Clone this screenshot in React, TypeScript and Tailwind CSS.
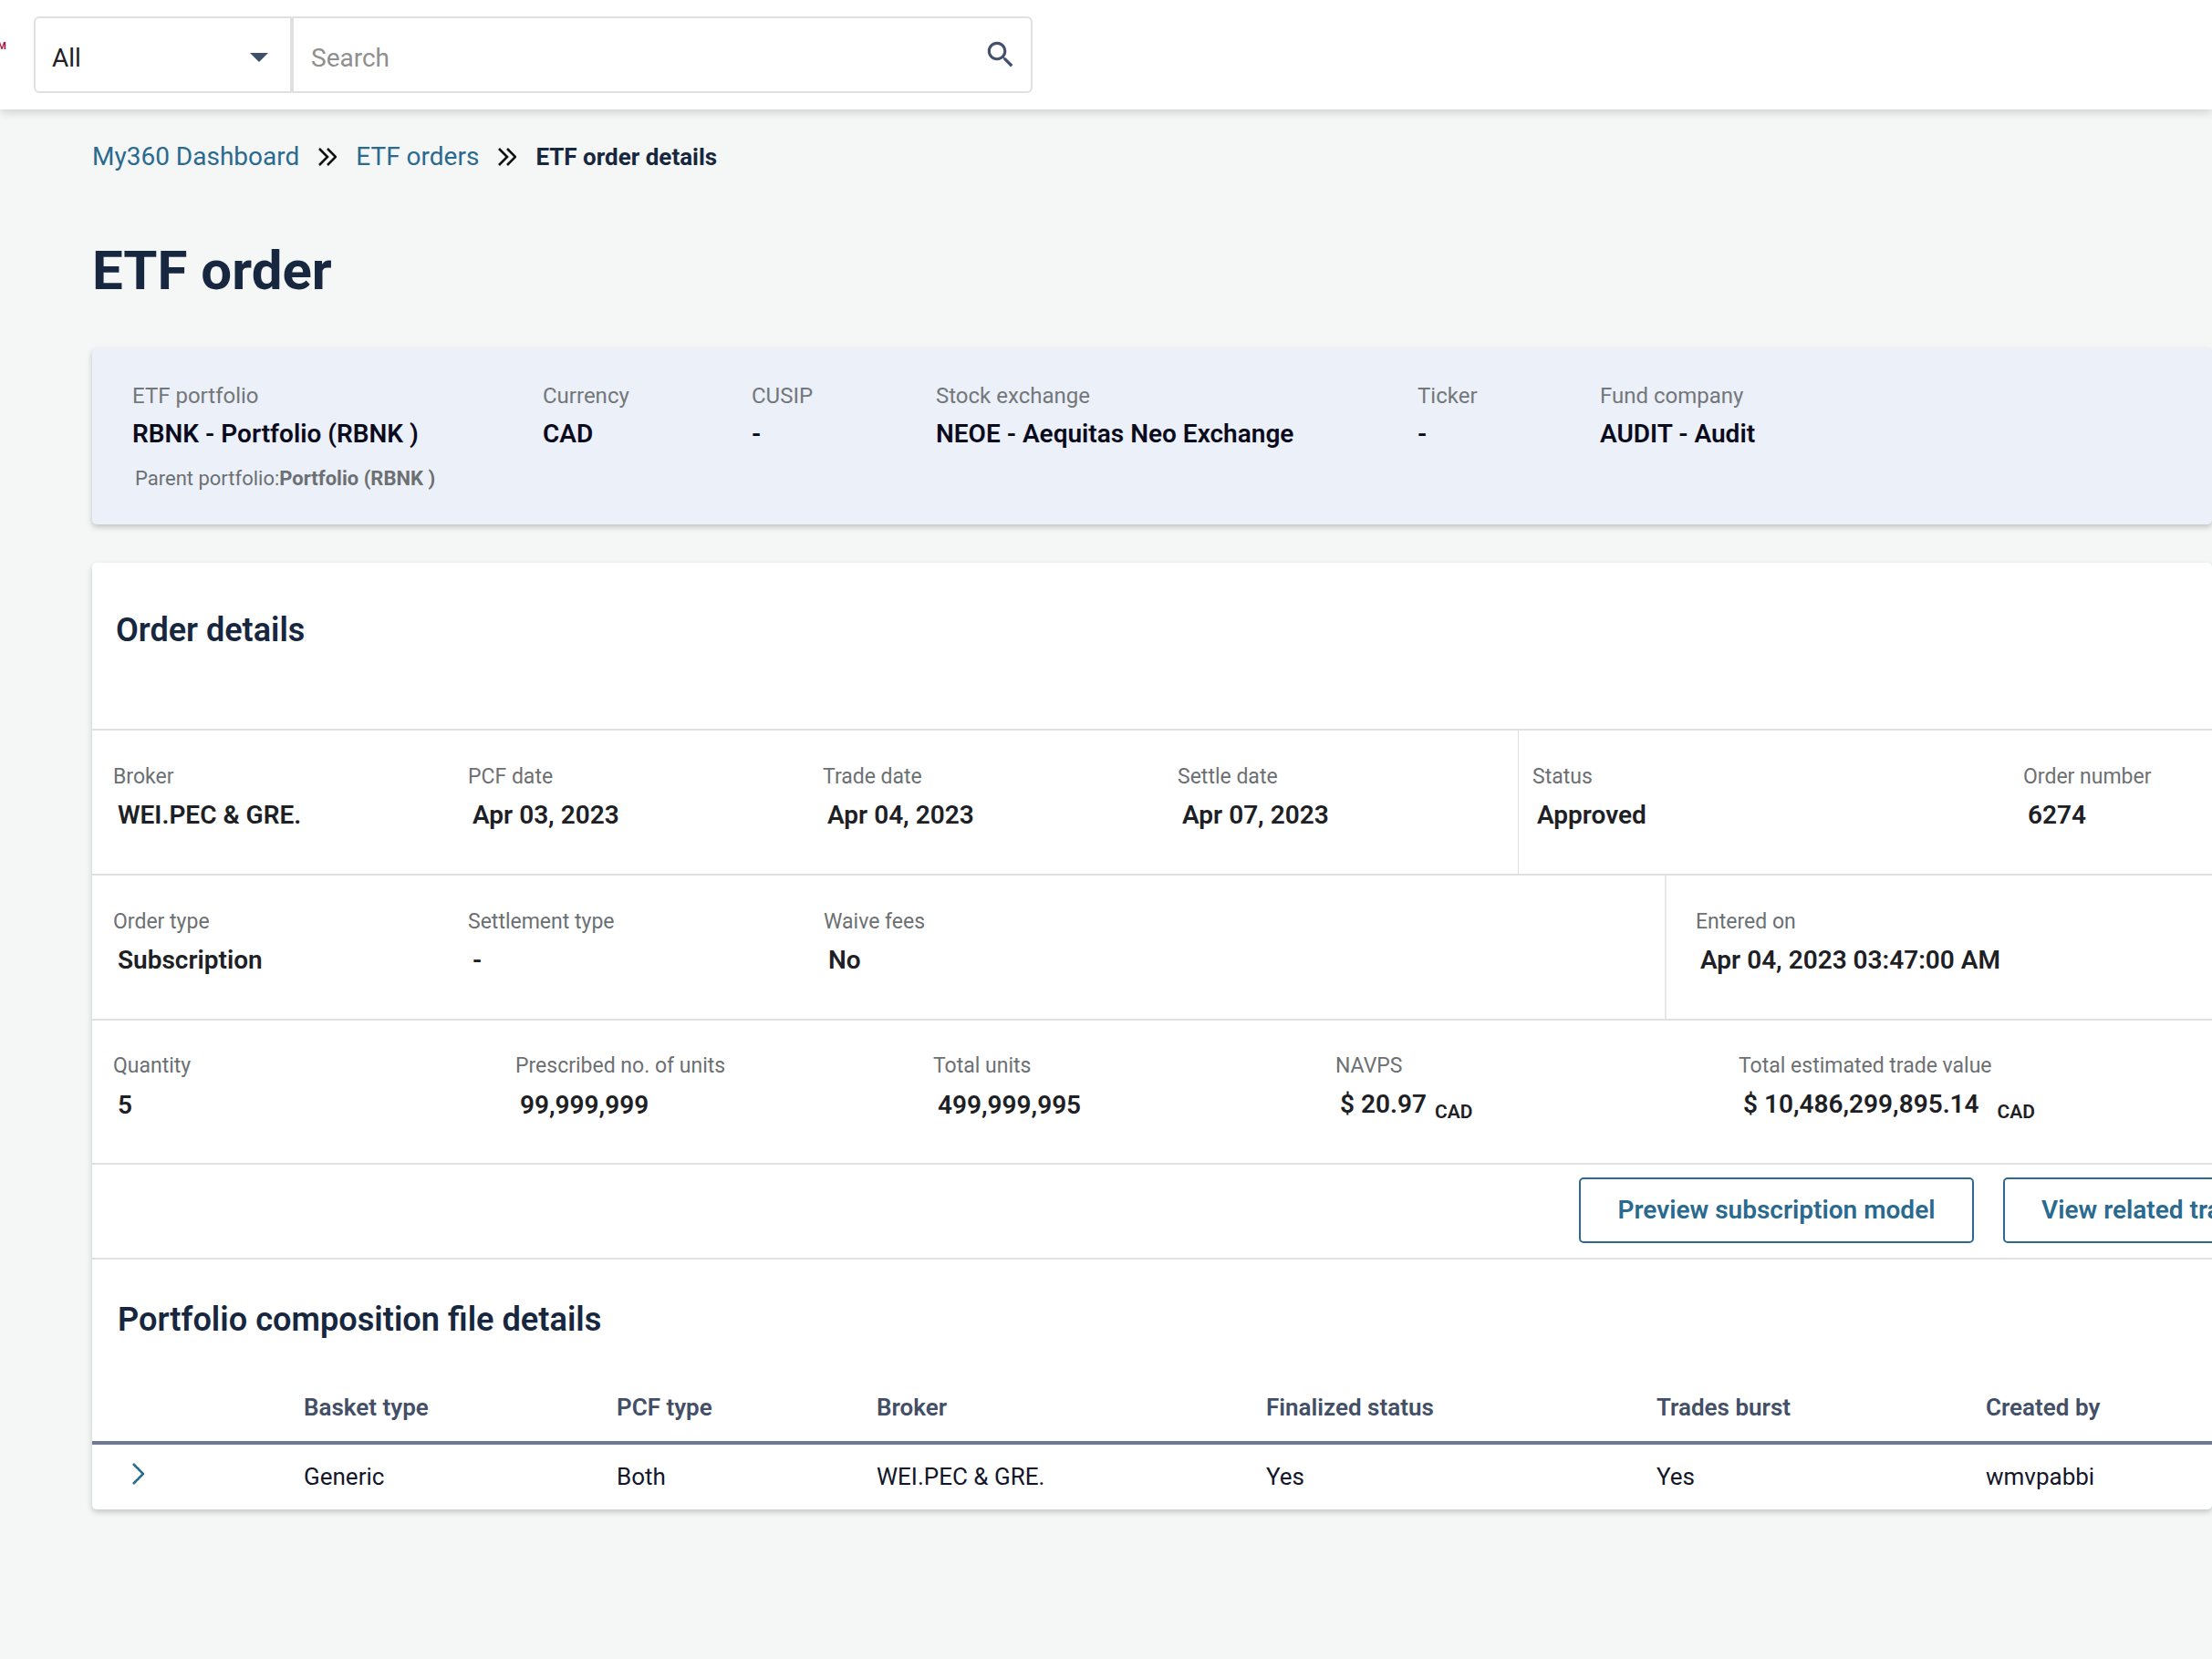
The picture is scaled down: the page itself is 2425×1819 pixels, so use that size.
import React from "react";

const summary = [
  { label: "Currency", value: "CAD", width: "w-[229px]" },
  { label: "CUSIP", value: "-", width: "w-[202px]" },
  { label: "Stock exchange", value: "NEOE - Aequitas Neo Exchange", width: "w-[528px]" },
  { label: "Ticker", value: "-", width: "w-[200px]" },
  { label: "Fund company", value: "AUDIT - Audit", width: "w-[400px]" },
];

const tableGrid =
  "grid grid-cols-[232px_343px_285px_427px_428px_361px_1fr] text-[26px] whitespace-nowrap";

function Field({
  label,
  value,
  width,
  pt = "pt-[7px]",
}: {
  label: string;
  value: React.ReactNode;
  width?: string;
  pt?: string;
}) {
  return (
    <div className={`shrink-0 ${width ?? ""}`}>
      <div className="text-[23px] leading-[34px] text-[#6c7073]">{label}</div>
      <div className={`${pt} pl-[5px] text-[28px] leading-[36px] font-semibold text-[#1d2024]`}>{value}</div>
    </div>
  );
}

function SummaryField({ label, value, width }: { label: string; value: string; width: string }) {
  return (
    <div className={`shrink-0 ${width}`}>
      <div className="text-[24px] leading-[34px] text-[#74777a]">{label}</div>
      <div className="pt-[7px] text-[28px] leading-[36px] font-semibold text-[#0b0b20]">{value}</div>
    </div>
  );
}

function DoubleChevron() {
  return (
    <svg viewBox="0 0 20 20" className="w-[20px] h-[20px] shrink-0" fill="none" stroke="#111" strokeWidth="2.6">
      <polyline points="1,1 10,10 1,19" />
      <polyline points="10,1 19,10 10,19" />
    </svg>
  );
}

export default function App() {
  return (
    <div className="w-[2425px] h-[1819px] overflow-hidden bg-[#f5f7f7] font-[Roboto,sans-serif]">
      <header className="relative h-[120px] bg-white shadow-[0_3px_10px_rgba(0,0,0,0.16)] flex items-start pt-[18px]">
        <div className="w-[7px] mt-[26px] overflow-hidden flex justify-end text-[11px] leading-[14px] font-bold text-[#a3173f]">
          M
        </div>
        <div className="ml-[30px] w-[1095px] h-[84px] flex border-2 border-[#e0e0e0] rounded-[6px]">
          <div className="w-[283px] shrink-0 border-r-4 border-[#e0e0e0] flex items-center justify-between pl-[18px] pr-[24px]">
            <span className="mt-[7px] text-[28px] text-[#212121]">All</span>
            <svg viewBox="0 0 20 10" className="mt-[5px] w-[20px] h-[10px]">
              <polygon points="0,0 20,0 10,10" fill="#3f4f6b" />
            </svg>
          </div>
          <div className="flex-1 flex items-center pl-[19px] pr-[14px]">
            <input
              placeholder="Search"
              className="mt-[7px] flex-1 bg-transparent outline-none text-[28px] placeholder:text-[#8f8f8f]"
            />
            <svg viewBox="0 0 24 24" className="w-[38px] h-[38px] -mt-[1px]" fill="#42526e">
              <path d="M15.5 14h-.79l-.28-.27C15.41 12.59 16 11.11 16 9.5 16 5.91 13.09 3 9.5 3S3 5.91 3 9.5 5.91 16 9.5 16c1.61 0 3.09-.59 4.23-1.57l.27.28v.79l5 4.99L20.49 19l-4.99-5zm-6 0C7.01 14 5 11.99 5 9.5S7.01 5 9.5 5 14 7.01 14 9.5 11.99 14 9.5 14z" />
            </svg>
          </div>
        </div>
      </header>

      <main className="pl-[101px]">
        <nav className="mt-[28px] h-[48px] flex items-center text-[28px] text-[#2b6a8f] whitespace-nowrap">
          <span>My360 Dashboard</span>
          <span className="mx-[21px] flex"><DoubleChevron /></span>
          <span>ETF orders</span>
          <span className="mx-[21px] flex"><DoubleChevron /></span>
          <span className="text-[26px] text-[#172740] font-bold">ETF order details</span>
        </nav>

        <h1 className="mt-[61px] h-[80px] text-[60px] leading-[80px] font-bold text-[#172740]">ETF order</h1>

        <section className="mt-[45px] h-[193px] bg-[#ebf0f9] rounded-[5px] shadow-[0_3px_6px_rgba(0,0,0,0.22)] pl-[44px] pt-[35px] flex">
          <div className="w-[450px] shrink-0">
            <div className="text-[24px] leading-[34px] text-[#74777a]">ETF portfolio</div>
            <div className="pt-[7px] text-[28px] leading-[36px] font-semibold text-[#0b0b20]">RBNK - Portfolio (RBNK )</div>
            <div className="pt-[16px] pl-[3px] text-[22px] leading-[30px] text-[#6c7073]">
              Parent portfolio:<span className="font-bold">Portfolio (RBNK )</span>
            </div>
          </div>
          {summary.map((s) => (
            <SummaryField key={s.label} {...s} />
          ))}
        </section>

        <section className="mt-[42px] h-[1038px] bg-white rounded-[5px] shadow-[0_3px_6px_rgba(0,0,0,0.2)] overflow-hidden">
          <div className="h-[182px] pl-[26px] pt-[52px]">
            <h2 className="text-[36px] leading-[44px] font-semibold text-[#172740]">Order details</h2>
          </div>

          <div className="h-[159px] border-t-2 border-[#e0e0e0] flex">
            <div className="w-[1564px] shrink-0 border-r border-[#dedede] pl-[23px] pt-[34px] flex">
              <Field label="Broker" value="WEI.PEC & GRE." width="w-[389px]" />
              <Field label="PCF date" value="Apr 03, 2023" width="w-[389px]" />
              <Field label="Trade date" value="Apr 04, 2023" width="w-[389px]" />
              <Field label="Settle date" value="Apr 07, 2023" width="w-[370px]" />
            </div>
            <div className="pl-[15px] pt-[34px] flex">
              <Field label="Status" value="Approved" width="w-[538px]" />
              <Field label="Order number" value="6274" />
            </div>
          </div>

          <div className="h-[159px] border-t-2 border-[#e0e0e0] flex">
            <div className="w-[1726px] shrink-0 border-r-2 border-[#e8e8e8] pl-[23px] pt-[34px] flex">
              <Field label="Order type" value="Subscription" width="w-[389px]" />
              <Field label="Settlement type" value="-" width="w-[390px]" />
              <Field label="Waive fees" value="No" width="w-[400px]" />
            </div>
            <div className="pl-[32px] pt-[34px] flex">
              <Field label="Entered on" value="Apr 04, 2023 03:47:00 AM" />
            </div>
          </div>

          <div className="h-[158px] border-t-2 border-[#e0e0e0] pl-[23px] pt-[33px] flex">
            <Field pt="pt-[8px]" label="Quantity" value="5" width="w-[441px]" />
            <Field pt="pt-[8px]" label="Prescribed no. of units" value="99,999,999" width="w-[458px]" />
            <Field pt="pt-[8px]" label="Total units" value="499,999,995" width="w-[441px]" />
            <Field
              pt="pt-[7px]"
              label="NAVPS"
              width="w-[442px]"
              value={
                <>
                  $ 20.97<span className="ml-[9px] text-[21px] align-[-6px]">CAD</span>
                </>
              }
            />
            <Field
              pt="pt-[7px]"
              label="Total estimated trade value"
              value={
                <>
                  $ 10,486,299,895.14<span className="ml-[20px] text-[21px] align-[-6px]">CAD</span>
                </>
              }
            />
          </div>

          <div className="h-[104px] border-t-2 border-[#e0e0e0] pl-[1630px] pt-[14px] flex gap-[32px] whitespace-nowrap">
            <button className="w-[433px] h-[72px] shrink-0 border-2 border-[#2e6a8f] rounded-[5px] text-[28px] font-semibold text-[#2b6a8f]">
              Preview subscription model
            </button>
            <button className="h-[72px] px-[40px] shrink-0 border-2 border-[#2e6a8f] rounded-[5px] text-[28px] font-semibold text-[#2b6a8f]">
              View related trades
            </button>
          </div>

          <div className="border-t-2 border-[#e0e0e0]">
            <h2 className="pl-[28px] pt-[44px] text-[36.2px] leading-[44px] font-semibold text-[#172740]">
              Portfolio composition file details
            </h2>
            <div className={`${tableGrid} mt-[57px] pb-[20px] border-b-4 border-[#6e7993] font-semibold text-[#434f66] leading-[34px]`}>
              <div />
              <div>Basket type</div>
              <div>PCF type</div>
              <div>Broker</div>
              <div>Finalized status</div>
              <div>Trades burst</div>
              <div>Created by</div>
            </div>
            <div className={`${tableGrid} h-[71px] items-center text-[#14162a]`}>
              <div className="pl-[44px] -mt-[7px] flex">
                <svg viewBox="0 0 13 24" className="w-[13px] h-[24px]" fill="none" stroke="#2b6a8f" strokeWidth="2.6">
                  <polyline points="1,1 12,12 1,23" />
                </svg>
              </div>
              <div>Generic</div>
              <div>Both</div>
              <div>WEI.PEC &amp; GRE.</div>
              <div>Yes</div>
              <div>Yes</div>
              <div>wmvpabbi</div>
            </div>
          </div>
        </section>
      </main>
    </div>
  );
}
